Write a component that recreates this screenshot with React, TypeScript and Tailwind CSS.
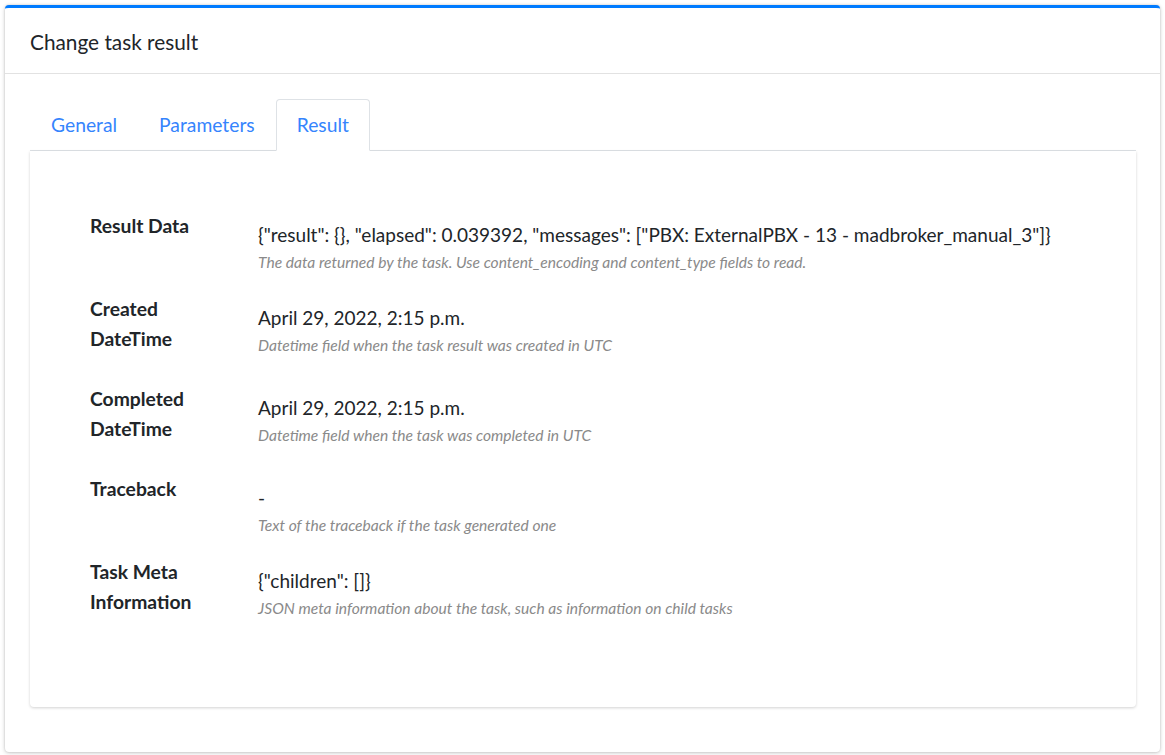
const rows = [
  {
    label: ["Result Data"],
    value:
      '{"result": {}, "elapsed": 0.039392, "messages": ["PBX: ExternalPBX - 13 - madbroker_manual_3"]}',
    help: "The data returned by the task. Use content_encoding and content_type fields to read.",
  },
  {
    label: ["Created", "DateTime"],
    value: "April 29, 2022, 2:15 p.m.",
    help: "Datetime field when the task result was created in UTC",
  },
  {
    label: ["Completed", "DateTime"],
    value: "April 29, 2022, 2:15 p.m.",
    help: "Datetime field when the task was completed in UTC",
  },
  {
    label: ["Traceback"],
    value: "-",
    help: "Text of the traceback if the task generated one",
  },
  {
    label: ["Task Meta", "Information"],
    value: '{"children": []}',
    help: "JSON meta information about the task, such as information on child tasks",
  },
];

const tabs = ["General", "Parameters", "Result"];

export default function App() {
  return (
    <div
      className="min-h-screen bg-white p-[5px] text-[#212529]"
      style={{ fontFamily: "Lato, 'Liberation Sans', sans-serif" }}
    >
      <div className="rounded-[4px] border-t-[3px] border-[#007bff] bg-white shadow-[0_0_2px_rgba(0,0,0,0.15),0_1px_4px_rgba(0,0,0,0.2)]">
        <div className="flex h-[66px] items-center border-b border-[#e2e2e2] px-[25px]">
          <h3 className="pt-[2px] text-[20.8px] font-normal">Change task result</h3>
        </div>

        <div className="pl-[25px] pr-[24px] pt-[25px] pb-[45px]">
          <ul className="flex border-b border-[#dee2e6]">
            {tabs.map((tab) => {
              const active = tab === "Result";
              return (
                <li key={tab} className="-mb-px">
                  <span
                    className={
                      active
                        ? "flex h-[52px] items-center rounded-t-[4px] border border-[#dee2e6] border-b-white bg-white px-[20px] pt-[1px] text-[19.3px] text-[#3584fd]"
                        : "flex h-[52px] items-center border border-transparent px-[20px] pt-[1px] text-[19.3px] text-[#3584fd]"
                    }
                  >
                    {tab}
                  </span>
                </li>
              );
            })}
          </ul>

          <div className="rounded-b-[4px] bg-white pl-[60px] pt-[60px] pb-[76px] shadow-[0_1px_3px_rgba(0,0,0,0.18)]">
            {rows.map((row) => (
              <div key={row.label[0]} className="mb-[16px] flex last:mb-0">
                <div className="w-[168px] shrink-0 pb-[14px] text-[19.3px] font-bold leading-[30px]">
                  {row.label.map((l) => (
                    <div key={l}>{l}</div>
                  ))}
                </div>
                <div className="pt-[10px] pb-[6px]">
                  <div className="text-[19px] leading-[27px]">{row.value}</div>
                  <div className="mt-[4px] text-[15.6px] italic leading-[20px] text-[#8a8a8a]">
                    {row.help}
                  </div>
                </div>
              </div>
            ))}
          </div>
        </div>
      </div>
    </div>
  );
}
